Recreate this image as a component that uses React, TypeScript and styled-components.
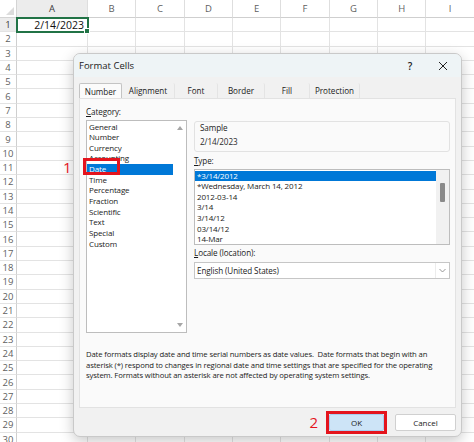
import React from "react";
import styled, { createGlobalStyle } from "styled-components";

const ui = `"Open Sans", "Noto Sans", sans-serif`;

const GlobalStyle = createGlobalStyle`
  html, body {
    margin: 0;
    padding: 0;
    background: #ffffff;
  }
  body {
    font-family: ${ui};
  }
`;

const Sheet = styled.div`
  position: relative;
  width: 474px;
  height: 442px;
  overflow: hidden;
  background: #ffffff;
`;

const Grid = styled.div`
  display: grid;
  grid-template-columns: 17px 71px repeat(8, 48.35px);
  grid-template-rows: 18px;
  grid-auto-rows: 14.3px;
`;

const Corner = styled.div`
  position: relative;
  border-right: 1px solid #d4d4d4;
  border-bottom: 1px solid #d4d4d4;
  background: #ffffff;

  &::after {
    content: "";
    position: absolute;
    right: 2px;
    bottom: 2px;
    border-left: 8px solid transparent;
    border-bottom: 8px solid #dcdcdc;
  }
`;

const ColHead = styled.div<{ $active?: boolean }>`
  display: flex;
  align-items: center;
  justify-content: center;
  font-size: 9.5px;
  color: ${(p) => (p.$active ? "#3a3a3a" : "#5f5f5f")};
  background: ${(p) => (p.$active ? "#ececec" : "#ffffff")};
  border-right: 1px solid #dedede;
  border-bottom: 1px solid #cfcfcf;
  box-sizing: border-box;
`;

const RowHead = styled.div<{ $active?: boolean }>`
  display: flex;
  align-items: center;
  justify-content: center;
  font-size: 9.5px;
  color: ${(p) => (p.$active ? "#3a3a3a" : "#5f5f5f")};
  background: ${(p) => (p.$active ? "#ececec" : "#ffffff")};
  border-right: 1px solid #cfcfcf;
  border-bottom: 1px solid #e3e3e3;
  box-sizing: border-box;
`;

const Cell = styled.div<{ $selected?: boolean }>`
  position: relative;
  display: flex;
  align-items: center;
  justify-content: flex-end;
  padding-right: 3px;
  font-size: 10.5px;
  color: #111;
  border-right: 1px solid #e3e3e3;
  border-bottom: 1px solid #e3e3e3;
  box-sizing: border-box;
  ${(p) =>
    p.$selected &&
    `
    outline: 2px solid #217346;
    outline-offset: -1px;
    z-index: 1;
    &::after {
      content: "";
      position: absolute;
      right: -3px;
      bottom: -3px;
      width: 4px;
      height: 4px;
      background: #217346;
      border: 1px solid #fff;
    }
  `}
`;

const Dialog = styled.div`
  position: absolute;
  left: 73px;
  top: 53px;
  width: 389px;
  height: 384px;
  display: flex;
  flex-direction: column;
  background: #f1f1f1;
  border: 1px solid #c9c9c9;
  border-radius: 7px;
  box-sizing: border-box;
  box-shadow: 0 4px 14px rgba(0, 0, 0, 0.22);
  overflow: hidden;
  z-index: 2;
`;

const TitleBar = styled.div`
  height: 23px;
  flex: none;
  display: flex;
  align-items: center;
  padding: 0 10px 0 5px;
  background: #eef4f6;
  font-size: 9.5px;
  color: #1a1a1a;
`;

const Title = styled.span`
  flex: 1;
`;

const TitleButton = styled.span`
  display: flex;
  align-items: center;
  justify-content: center;
  width: 16px;
  margin-left: 17px;
  font-size: 10px;
  font-weight: 600;
  color: #222;
`;

const Body = styled.div`
  flex: 1;
  display: flex;
  flex-direction: column;
  padding: 6px 5px 0 5px;
`;

const TabStrip = styled.div`
  display: flex;
  height: 15px;
`;

const Tab = styled.div<{ $w: number; $active?: boolean }>`
  width: ${(p) => p.$w}px;
  display: flex;
  align-items: center;
  justify-content: center;
  font-size: 8.1px;
  color: #1a1a1a;
  box-sizing: border-box;
  background: ${(p) => (p.$active ? "#fbfbfb" : "transparent")};
  border: ${(p) => (p.$active ? "1px solid #c4c4c4" : "none")};
  border-bottom: none;
  border-right: ${(p) => (p.$active ? "1px solid #c4c4c4" : "1px solid #e4e4e4")};
  border-radius: 2px 2px 0 0;
`;

const Panel = styled.div`
  height: 310px;
  display: flex;
  flex-direction: column;
  padding: 7px 5px 0 6px;
  background: #fafafa;
  border: 1px solid #e2e2e2;
  box-sizing: border-box;
`;

const Columns = styled.div`
  display: flex;
  gap: 7px;
`;

const LeftCol = styled.div`
  width: 101px;
  display: flex;
  flex-direction: column;
`;

const RightCol = styled.div`
  flex: 1;
  display: flex;
  flex-direction: column;
  padding-top: 15px;
`;

const Label = styled.div<{ $gap?: number }>`
  height: 12px;
  line-height: 12px;
  font-size: 8.1px;
  letter-spacing: -0.1px;
  color: #1a1a1a;
  margin-top: ${(p) => p.$gap ?? 0}px;
  margin-bottom: 2px;

  u {
    text-decoration: underline;
    text-underline-offset: 1px;
  }
`;

const ListBox = styled.div<{ $h: number }>`
  height: ${(p) => p.$h}px;
  display: flex;
  background: #ffffff;
  border: 1px solid #bdbdbd;
  box-sizing: border-box;
`;

const Items = styled.div`
  flex: 1;
  padding-top: 0.5px;
  overflow: hidden;
`;

const Item = styled.div<{ $selected?: boolean }>`
  height: 10.65px;
  line-height: 10.65px;
  padding-left: 2px;
  font-size: 8px;
  letter-spacing: -0.15px;
  white-space: nowrap;
  color: ${(p) => (p.$selected ? "#ffffff" : "#1a1a1a")};
  background: ${(p) => (p.$selected ? "#0078d7" : "transparent")};
`;

const Rail = styled.div<{ $tint?: boolean }>`
  width: 13px;
  flex: none;
  position: relative;
  display: flex;
  flex-direction: column;
  justify-content: space-between;
  align-items: center;
  padding: 5px 0;
  box-sizing: border-box;
  background: ${(p) => (p.$tint ? "#f1f1f1" : "#ffffff")};
`;

const Arrow = styled.span<{ $down?: boolean }>`
  width: 0;
  height: 0;
  border-left: 3px solid transparent;
  border-right: 3px solid transparent;
  ${(p) =>
    p.$down
      ? "border-top: 4px solid #a6a6a6;"
      : "border-bottom: 4px solid #a6a6a6;"}
`;

const Thumb = styled.span`
  position: absolute;
  left: 4px;
  top: 13px;
  width: 5px;
  height: 19px;
  background: #8a8a8a;
  border-radius: 1px;
`;

const SampleBox = styled.div`
  height: 31px;
  display: flex;
  flex-direction: column;
  justify-content: space-between;
  padding: 0 5px 3px 5px;
  border: 1px solid #e2e2e2;
  border-radius: 3px;
  box-sizing: border-box;
  font-size: 8.1px;
  letter-spacing: -0.1px;
  color: #1a1a1a;
  line-height: 12px;
`;

const SampleValue = styled.span`
  color: #2b2b2b;
`;

const Select = styled.div`
  height: 17px;
  margin-top: 1px;
  display: flex;
  align-items: center;
  background: #ffffff;
  border: 1px solid #c6c6c6;
  box-sizing: border-box;
  font-size: 8.1px;
  letter-spacing: -0.1px;
  color: #1a1a1a;
`;

const SelectText = styled.span`
  flex: 1;
  padding-left: 2px;
`;

const SelectCaret = styled.span`
  width: 13px;
  height: 100%;
  display: flex;
  align-items: center;
  justify-content: center;
  border-left: 1px solid #ececec;
`;

const Description = styled.p`
  margin: 16px 0 0 0;
  font-size: 7.7px;
  letter-spacing: -0.13px;
  line-height: 10.7px;
  color: #1a1a1a;
  white-space: nowrap;
`;

const Footer = styled.div`
  flex: 1;
  display: flex;
  align-items: center;
  justify-content: flex-end;
  gap: 8px;
`;

const Step = styled.span`
  font-size: 15px;
  line-height: 15px;
  color: #e4141d;
`;

const Callout = styled.div`
  border: 3px solid #e4141d;
  display: flex;
`;

const Button = styled.div<{ $primary?: boolean; $w: number }>`
  width: ${(p) => p.$w}px;
  height: 17px;
  display: flex;
  align-items: center;
  justify-content: center;
  font-size: 8px;
  color: #1a1a1a;
  box-sizing: border-box;
  background: ${(p) => (p.$primary ? "#cde4f7" : "#ffffff")};
  border: 1px solid ${(p) => (p.$primary ? "#a8cdef" : "#d0d0d0")};
  border-radius: 2px;
`;

const Marker = styled.div<{ $x: number; $y: number; $w: number; $h: number }>`
  position: absolute;
  left: ${(p) => p.$x}px;
  top: ${(p) => p.$y}px;
  width: ${(p) => p.$w}px;
  height: ${(p) => p.$h}px;
  border: 3px solid #e4141d;
  box-sizing: border-box;
  z-index: 3;
`;

const MarkerNumber = styled.span<{ $x: number; $y: number }>`
  position: absolute;
  left: ${(p) => p.$x}px;
  top: ${(p) => p.$y}px;
  font-size: 15px;
  line-height: 15px;
  color: #e4141d;
  z-index: 3;
`;

const columns = ["A", "B", "C", "D", "E", "F", "G", "H", "I"];
const rows = Array.from({ length: 30 }, (_, i) => i + 1);

const tabs = [
  { name: "Number", w: 43 },
  { name: "Alignment", w: 53 },
  { name: "Font", w: 43 },
  { name: "Border", w: 47 },
  { name: "Fill", w: 45 },
  { name: "Protection", w: 50 },
];

const categories = [
  "General",
  "Number",
  "Currency",
  "Accounting",
  "Date",
  "Time",
  "Percentage",
  "Fraction",
  "Scientific",
  "Text",
  "Special",
  "Custom",
];

const types = [
  "*3/14/2012",
  "*Wednesday, March 14, 2012",
  "2012-03-14",
  "3/14",
  "3/14/12",
  "03/14/12",
  "14-Mar",
];

const CloseIcon = () => (
  <svg width="10" height="10" viewBox="0 0 10 10">
    <path d="M1 1 L9 9 M9 1 L1 9" stroke="#222" strokeWidth="1" fill="none" />
  </svg>
);

const Chevron = () => (
  <svg width="7" height="5" viewBox="0 0 7 5">
    <path d="M0.5 1 L3.5 4 L6.5 1" stroke="#8a8a8a" strokeWidth="0.9" fill="none" />
  </svg>
);

const App: React.FC = () => {
  return (
    <>
      <GlobalStyle />
      <Sheet>
        <Grid>
          <Corner />
          {columns.map((c) => (
            <ColHead key={c} $active={c === "A"}>
              {c}
            </ColHead>
          ))}
          {rows.map((r) => (
            <React.Fragment key={r}>
              <RowHead $active={r === 1}>{r}</RowHead>
              {columns.map((c) => (
                <Cell key={c} $selected={r === 1 && c === "A"}>
                  {r === 1 && c === "A" ? "2/14/2023" : null}
                </Cell>
              ))}
            </React.Fragment>
          ))}
        </Grid>

        <Dialog>
          <TitleBar>
            <Title>Format Cells</Title>
            <TitleButton>?</TitleButton>
            <TitleButton>
              <CloseIcon />
            </TitleButton>
          </TitleBar>
          <Body>
            <TabStrip>
              {tabs.map((t, i) => (
                <Tab key={t.name} $w={t.w} $active={i === 0}>
                  {t.name}
                </Tab>
              ))}
            </TabStrip>
            <Panel>
              <Columns>
                <LeftCol>
                  <Label>
                    <u>C</u>ategory:
                  </Label>
                  <ListBox $h={213}>
                    <Items>
                      {categories.map((c) => (
                        <Item key={c} $selected={c === "Date"}>
                          {c}
                        </Item>
                      ))}
                    </Items>
                    <Rail>
                      <Arrow />
                      <Arrow $down />
                    </Rail>
                  </ListBox>
                </LeftCol>
                <RightCol>
                  <SampleBox>
                    <span>Sample</span>
                    <SampleValue>2/14/2023</SampleValue>
                  </SampleBox>
                  <Label $gap={3}>
                    <u>T</u>ype:
                  </Label>
                  <ListBox $h={76}>
                    <Items>
                      {types.map((t, i) => (
                        <Item key={t} $selected={i === 0}>
                          {t}
                        </Item>
                      ))}
                    </Items>
                    <Rail $tint>
                      <Thumb />
                    </Rail>
                  </ListBox>
                  <Label $gap={2}>
                    <u>L</u>ocale (location):
                  </Label>
                  <Select>
                    <SelectText>English (United States)</SelectText>
                    <SelectCaret>
                      <Chevron />
                    </SelectCaret>
                  </Select>
                </RightCol>
              </Columns>
              <Description>
                Date formats display date and time serial numbers as date values.&nbsp; Date formats that begin with an
                <br />
                asterisk (*) respond to changes in regional date and time settings that are specified for the operating
                <br />
                system. Formats without an asterisk are not affected by operating system settings.
              </Description>
            </Panel>
            <Footer>
              <Step>2</Step>
              <Callout>
                <Button $primary $w={55}>
                  OK
                </Button>
              </Callout>
              <Button $w={61}>Cancel</Button>
            </Footer>
          </Body>
        </Dialog>

        <Marker $x={83} $y={158} $w={37} $h={17} />
        <MarkerNumber $x={63} $y={160}>
          1
        </MarkerNumber>
      </Sheet>
    </>
  );
};

export default App;
